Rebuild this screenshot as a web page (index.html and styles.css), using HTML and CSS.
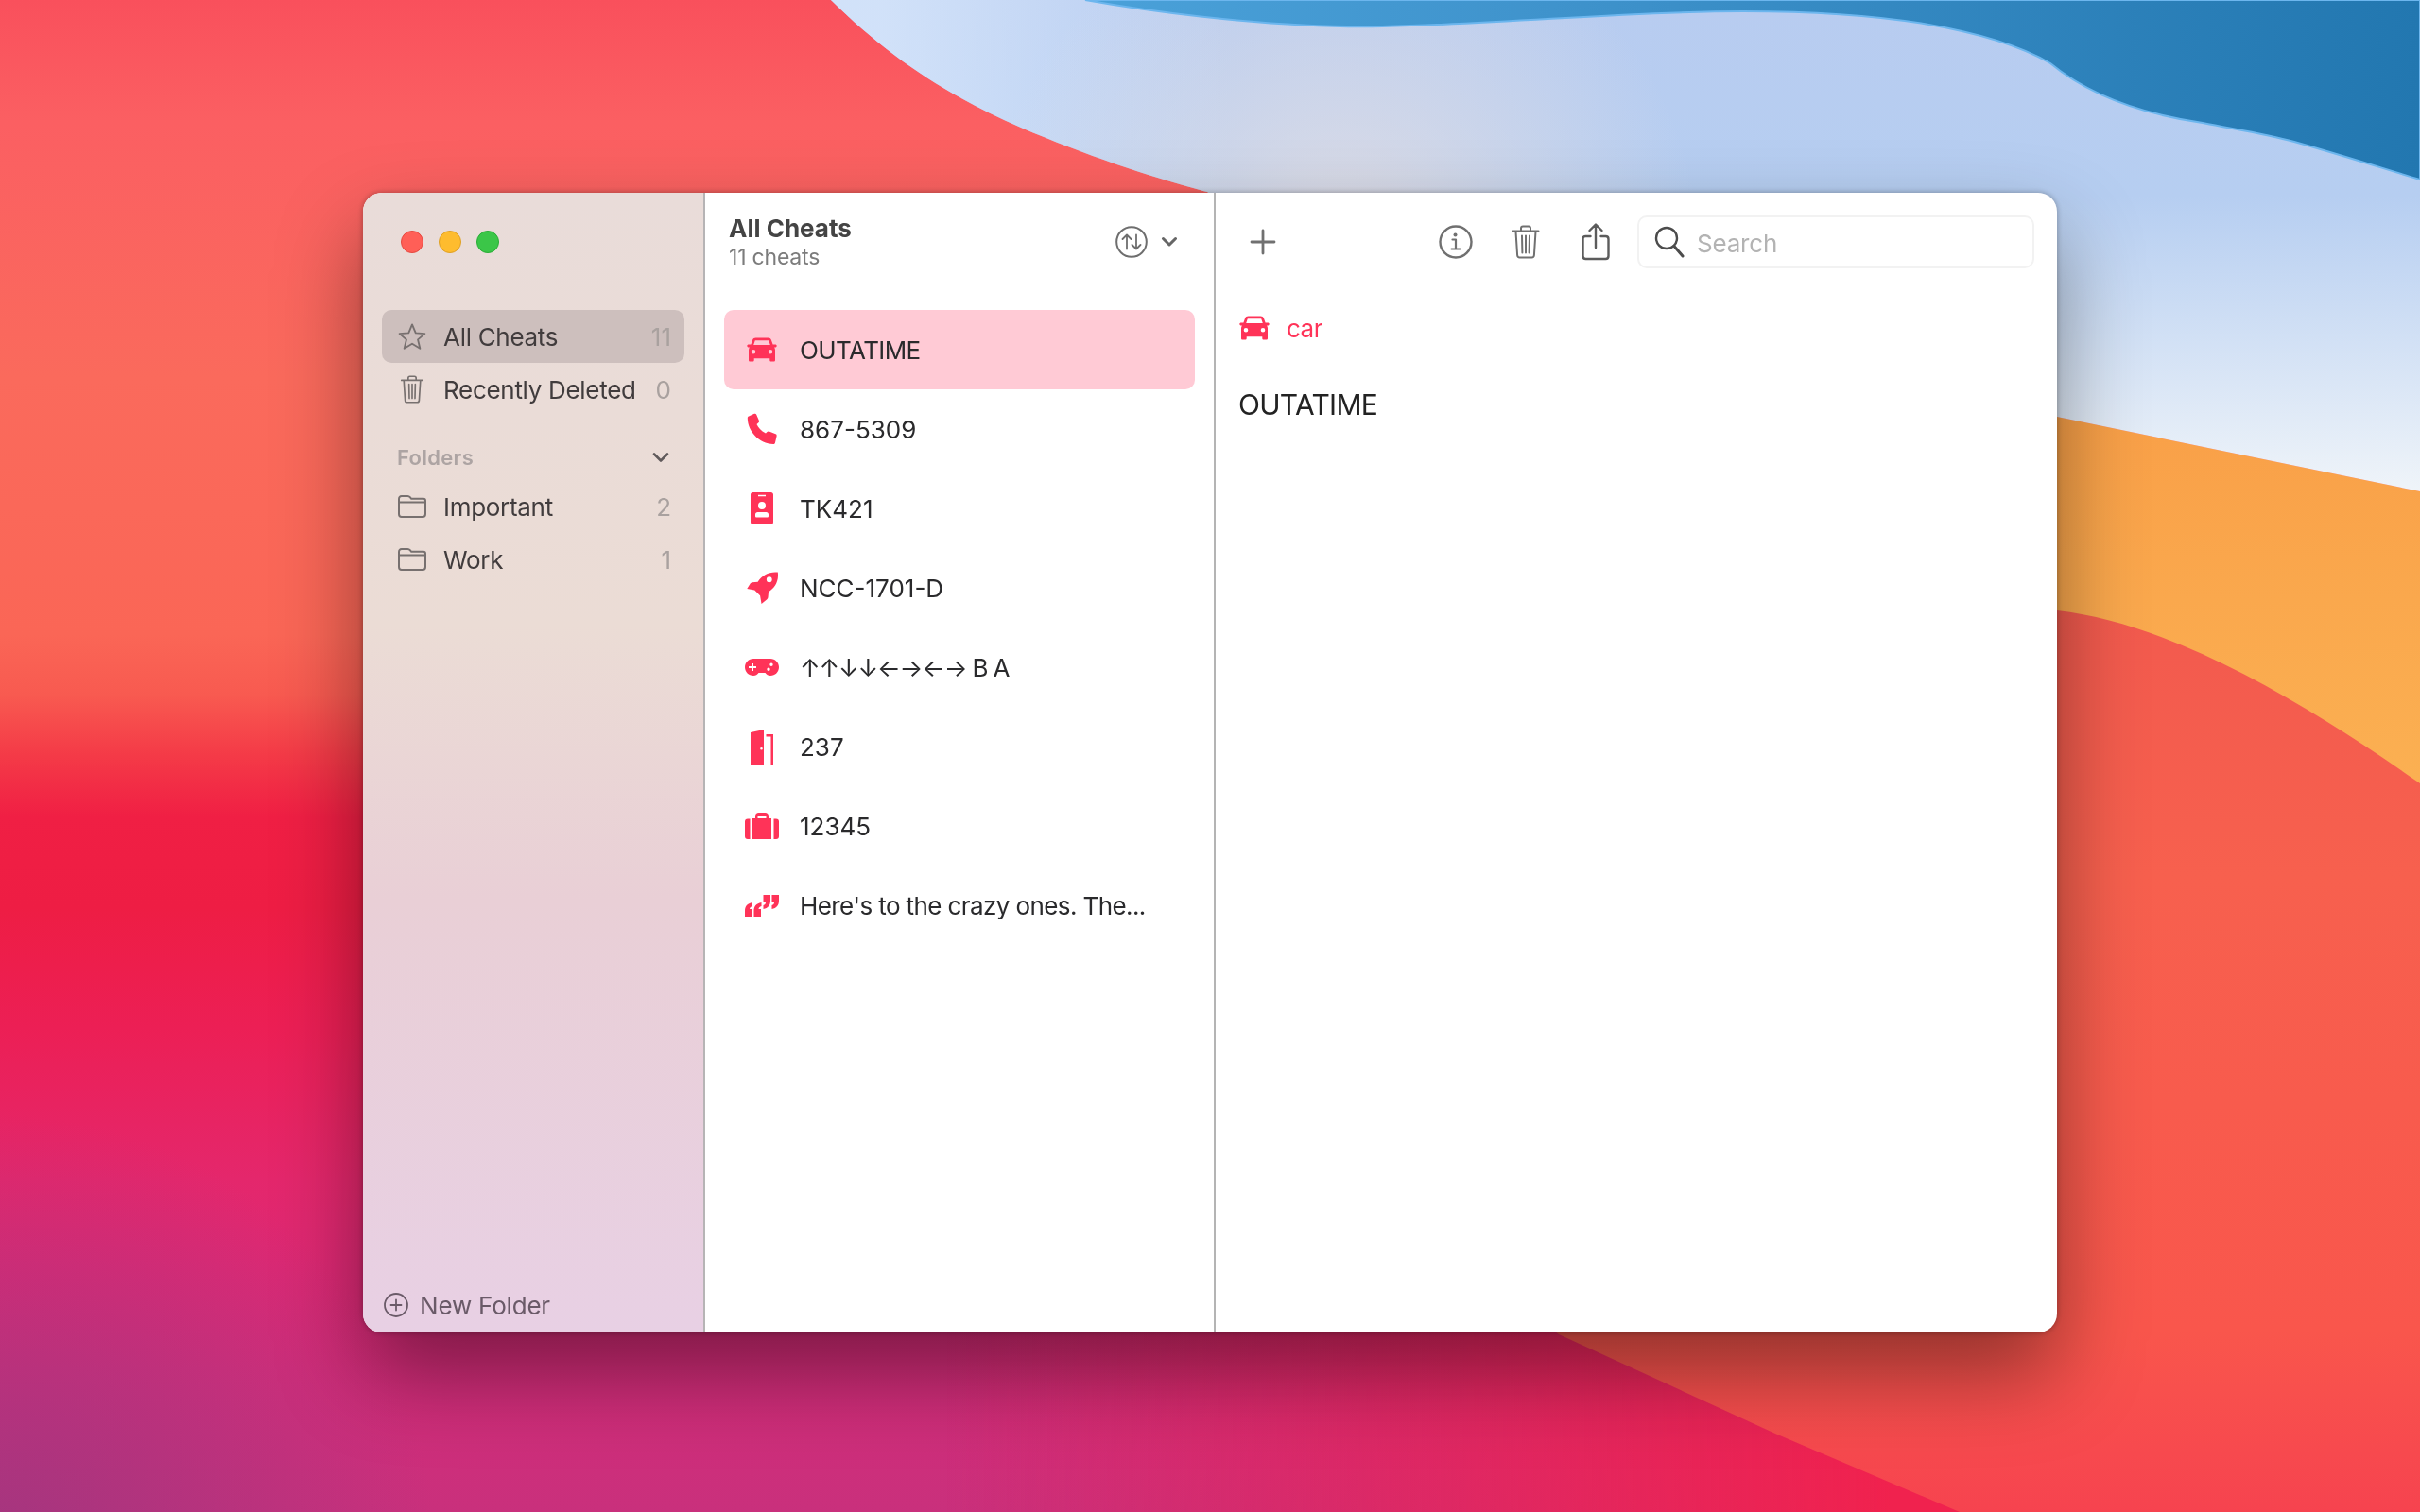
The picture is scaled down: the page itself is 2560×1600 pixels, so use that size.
FILE: index.html
```html
<!DOCTYPE html>
<html lang="en">
<head>
  <meta charset="UTF-8">
  <title>Cheats</title>
  <link rel="stylesheet" href="styles.css">
</head>
<body>
  <svg class="hidden" width="0" height="0">
    <symbol id="car" viewBox="0 0 32 26">
      <path fill-rule="evenodd" d="M9.5 .5h13c1.7 0 2.8.8 3.4 2.3L27.6 7.6H30c1 0 1.7.6 1.7 1.4s-.7 1.5-1.7 1.5h-.9c.6.9.9 1.9.9 3V24c0 1-.6 1.6-1.5 1.6h-2.7c-.9 0-1.5-.6-1.5-1.6v-1.7H7.7V24c0 1-.6 1.6-1.5 1.6H3.5C2.6 25.600 2 25 2 24V13.500c0-1.100.3-2.100.9-3H2C1 10.500.3 9.800.3 9S1 7.600 2 7.600h2.400l1.700-4.800C6.700 1.300 7.800.5 9.500.5zM8.800 3.200 7.200 8h17.600l-1.600-4.800zM7 13a2.300 2.300 0 1 0 0 4.600A2.300 2.300 0 0 0 7 13zm18 0a2.300 2.300 0 1 0 0 4.600 2.300 2.300 0 0 0 0-4.600z"/>
    </symbol>
    <symbol id="trash" viewBox="0 0 30 36">
      <path fill="none" stroke="currentColor" stroke-width="2" stroke-linecap="round" stroke-linejoin="round" d="M1.500 6.500h27M10 6V3.500C10 2.200 10.800 1.500 12 1.500h6c1.200 0 2 .7 2 2V6M4.500 7l1.600 25c.1 1.600 1 2.500 2.500 2.500h12.800c1.500 0 2.400-.9 2.500-2.500L25.500 7M11 11.500l.4 18M15 11.500v18M19 11.500l-.4 18"/>
    </symbol>
    <symbol id="folder" viewBox="0 0 30 24">
      <path fill="none" stroke="currentColor" stroke-width="2" stroke-linejoin="round" d="M1 20V4c0-1.800 1-3 2.800-3h6.400c1.200 0 1.900.4 2.600 1.200l1.400 1.600H27c1.300 0 2 .8 2 2.200V20c0 1.800-1 3-2.800 3H3.800C2 23 1 21.800 1 20zM1 7.500h28"/>
    </symbol>
  </svg>

  <svg class="wallpaper" viewBox="0 0 2560 1600" preserveAspectRatio="none">
    <defs>
      <linearGradient id="wp-base" x1="0" y1="0" x2="0" y2="1">
        <stop offset="0" stop-color="#f9505c"/>
        <stop offset=".08" stop-color="#fb5f62"/>
        <stop offset=".25" stop-color="#fa6a5c"/>
        <stop offset=".42" stop-color="#fa6656"/>
        <stop offset=".46" stop-color="#f85a50"/>
        <stop offset=".5" stop-color="#f43a47"/>
        <stop offset=".54" stop-color="#f01f44"/>
        <stop offset=".6" stop-color="#ee1d44"/>
        <stop offset=".68" stop-color="#ec1f55"/>
        <stop offset=".78" stop-color="#e4276c"/>
        <stop offset=".84" stop-color="#dd2974"/>
        <stop offset=".92" stop-color="#d22d7a"/>
        <stop offset="1" stop-color="#c9307c"/>
      </linearGradient>
      <linearGradient id="wp-low" gradientUnits="userSpaceOnUse" x1="1000" y1="0" x2="2000" y2="0">
        <stop offset="0" stop-color="#f0224e" stop-opacity="0"/>
        <stop offset="1" stop-color="#f0224e"/>
      </linearGradient>
      <linearGradient id="wp-mask-fade" x1="0" y1="0" x2="0" y2="1">
        <stop offset="0" stop-color="#fff" stop-opacity="0"/>
        <stop offset=".5" stop-color="#fff"/>
      </linearGradient>
      <mask id="wp-low-mask"><rect y="1000" width="2560" height="600" fill="url(#wp-mask-fade)"/></mask>
      <radialGradient id="wp-corner" gradientUnits="userSpaceOnUse" cx="0" cy="1640" r="460">
        <stop offset="0" stop-color="#a0367f" stop-opacity=".9"/>
        <stop offset="1" stop-color="#a0367f" stop-opacity="0"/>
      </radialGradient>
      <linearGradient id="wp-red" gradientUnits="userSpaceOnUse" x1="0" y1="640" x2="0" y2="1600">
        <stop offset="0" stop-color="#f25a4e"/>
        <stop offset=".3" stop-color="#f7604e"/>
        <stop offset=".8" stop-color="#f9564c"/>
        <stop offset="1" stop-color="#f6434f"/>
      </linearGradient>
      <linearGradient id="wp-orange" gradientUnits="userSpaceOnUse" x1="0" y1="440" x2="0" y2="830">
        <stop offset="0" stop-color="#f9a048"/>
        <stop offset="1" stop-color="#fbb052"/>
      </linearGradient>
      <linearGradient id="wp-sky" gradientUnits="userSpaceOnUse" x1="0" y1="0" x2="0" y2="520">
        <stop offset="0" stop-color="#b8ccf0"/>
        <stop offset=".4" stop-color="#b6cef1"/>
        <stop offset="1" stop-color="#eff4f9"/>
      </linearGradient>
      <linearGradient id="wp-sky-left" gradientUnits="userSpaceOnUse" x1="930" y1="40" x2="1300" y2="30">
        <stop offset="0" stop-color="#d4e4fa" stop-opacity=".9"/>
        <stop offset="1" stop-color="#d4e4fa" stop-opacity="0"/>
      </linearGradient>
      <radialGradient id="wp-sky-warm" gradientUnits="userSpaceOnUse" cx="1420" cy="270" r="380">
        <stop offset="0" stop-color="#e6dfe2" stop-opacity=".85"/>
        <stop offset="1" stop-color="#e6dfe2" stop-opacity="0"/>
      </radialGradient>
      <linearGradient id="wp-blue" gradientUnits="userSpaceOnUse" x1="1150" y1="0" x2="2560" y2="0">
        <stop offset="0" stop-color="#4aa1d9"/>
        <stop offset=".35" stop-color="#3f93cc"/>
        <stop offset="1" stop-color="#2277b0"/>
      </linearGradient>
    </defs>
    <rect width="2560" height="1600" fill="url(#wp-base)"/>
    <rect y="1000" width="2560" height="600" fill="url(#wp-low)" mask="url(#wp-low-mask)"/>
    <rect y="1100" width="500" height="500" fill="url(#wp-corner)"/>
    <path fill="url(#wp-red)" d="M2560 600L2000 500L1500 1300L1649 1412L1878 1517L2073 1600H2560Z"/>
    <path fill="url(#wp-orange)" d="M2560 520L2176 441L2000 430V640L2176 646C2300 660 2440 745 2560 829Z"/>
    <path fill="url(#wp-sky)" d="M879 0C940 60 1000 100 1080 135C1150 165 1220 188 1277 203L1400 300L2176 441L2560 520V0Z"/>
    <path fill="url(#wp-sky-left)" d="M879 0C940 60 1000 100 1080 135C1150 165 1220 188 1277 203L1400 300H1500V0Z"/>
    <path fill="url(#wp-sky-warm)" d="M879 0C940 60 1000 100 1080 135C1150 165 1220 188 1277 203L1400 300L2176 441L2560 520V0Z"/>
    <path fill="url(#wp-blue)" stroke="#6cb6ee" stroke-width="2" d="M1148 0C1250 18 1370 30 1462 28C1600 25 1720 12 1844 12C1930 12 1985 17 2035 25C2100 36 2140 50 2169 67C2215 105 2275 122 2330 130C2365 137 2395 141 2427 150C2480 165 2520 178 2560 190V0Z"/>
  </svg>

  <div class="desktop">
    <div class="window">
      <aside class="sidebar">
        <div class="traffic">
          <span class="light red"></span>
          <span class="light yellow"></span>
          <span class="light green"></span>
        </div>

        <div class="side-row active">
          <svg class="side-icon" viewBox="0 0 32 30"><path fill="none" stroke="currentColor" stroke-width="2" stroke-linejoin="round" d="M16 1.500l4 9.600 10.300.8-7.800 6.700 2.400 10.100L16 23.300l-8.900 5.400 2.400-10.100-7.800-6.700 10.300-.8z"/></svg>
          <span class="side-label">All Cheats</span>
          <span class="side-count">11</span>
        </div>
        <div class="side-row">
          <svg class="side-icon trash-sm"><use href="#trash"/></svg>
          <span class="side-label">Recently Deleted</span>
          <span class="side-count">0</span>
        </div>

        <div class="side-head">
          <span>Folders</span>
          <svg class="side-chev" viewBox="0 0 18 12"><path fill="none" stroke="currentColor" stroke-width="2.600" stroke-linecap="round" stroke-linejoin="round" d="M2 2.500l7 7 7-7"/></svg>
        </div>
        <div class="side-row">
          <svg class="side-icon folder-sm"><use href="#folder"/></svg>
          <span class="side-label">Important</span>
          <span class="side-count">2</span>
        </div>
        <div class="side-row">
          <svg class="side-icon folder-sm"><use href="#folder"/></svg>
          <span class="side-label">Work</span>
          <span class="side-count">1</span>
        </div>

        <div class="new-folder">
          <svg class="new-icon" viewBox="0 0 26 26"><circle cx="13" cy="13" r="12" fill="none" stroke="currentColor" stroke-width="1.800"/><path stroke="currentColor" stroke-width="1.800" stroke-linecap="round" d="M13 7.500v11M7.500 13h11"/></svg>
          <span>New Folder</span>
        </div>
      </aside>

      <section class="list-pane">
        <header class="list-head">
          <div class="list-titles">
            <div class="list-title">All Cheats</div>
            <div class="list-sub">11 cheats</div>
          </div>
          <svg class="sort-icon" viewBox="0 0 34 34"><circle cx="17" cy="17" r="15.800" fill="none" stroke="currentColor" stroke-width="2"/><path fill="none" stroke="currentColor" stroke-width="1.800" stroke-linecap="round" stroke-linejoin="round" d="M12 24.500V9.500M7.500 14l4.500-4.500 4.500 4.500M22 9.500v15M17.500 20l4.500 4.500 4.500-4.500"/></svg>
          <svg class="sort-chev" viewBox="0 0 18 12"><path fill="none" stroke="currentColor" stroke-width="3" stroke-linecap="round" stroke-linejoin="round" d="M2.500 2.500L9 9l6.500-6.500"/></svg>
        </header>

        <ul class="cheats">
          <li class="cheat selected">
            <span class="cheat-icon"><svg class="ic-car"><use href="#car"/></svg></span>
            <span class="tight">OUTATIME</span>
          </li>
          <li class="cheat">
            <span class="cheat-icon"><svg class="ic-phone" viewBox="0 0 32 34"><path d="M2 3.500L8 .8C9 .4 9.800.8 10.200 1.700L13 8.300C13.300 9.100 13.100 9.800 12.400 10.300L10.500 12C12 15 15 19 20 21.500L21.500 20C22.100 19.400 22.800 19.300 23.500 19.600L30.500 22.300C31.400 22.700 31.800 23.500 31.600 24.400L30 31.500C29.800 32.500 29 33.100 28 33C13 32.500 1 19.500 .8 5.500C.8 4.500 1.200 3.800 2 3.500Z"/></svg></span>
            <span>867-5309</span>
          </li>
          <li class="cheat">
            <span class="cheat-icon"><svg class="ic-badge" viewBox="0 0 24 34"><path fill-rule="evenodd" d="M2.500 0h19C23 0 24 1 24 2.500v29c0 1.500-1 2.500-2.500 2.500h-19C1 34 0 33 0 31.500v-29C0 1 1 0 2.500 0zM8 2.800v1.400h8V2.800zM12 10a4 4 0 1 0 0 8 4 4 0 0 0 0-8zM7.500 21C6 21 5 22 5 23.500V25c0 1 .6 1.500 1.500 1.500h11c.9 0 1.500-.5 1.500-1.500v-1.500C19 22 18 21 16.500 21z"/></svg></span>
            <span>TK421</span>
          </li>
          <li class="cheat">
            <span class="cheat-icon"><svg class="ic-rocket" viewBox="0 0 34 36"><path fill-rule="evenodd" d="M33.800 .6C25 -.5 16.500 3.500 12 11L6 11.500C5 11.600 4.300 12 3.800 12.800L.3 18.500L8.500 20L14.500 26L16 35L22 30C22.800 29.300 23.200 28.600 23.200 27.600L23.700 22C31 17 35 10 33.800 .6ZM24.500 5.500a3 3 0 1 1 0 6 3 3 0 0 1 0-6Z"/></svg></span>
            <span>NCC-1701-D</span>
          </li>
          <li class="cheat">
            <span class="cheat-icon"><svg class="ic-pad" viewBox="0 0 36 18"><path fill-rule="evenodd" d="M9 0h18c5 0 9 4 9 9s-4 9-9 9c-2.500 0-4-1-5.500-3h-7C13 17 11.500 18 9 18c-5 0-9-4-9-9s4-9 9-9zM7 5v3H4v2h3v3h2v-3h3V8H9V5zM28 4.500a1.700 1.700 0 1 0 0 3.400 1.700 1.700 0 0 0 0-3.400zM25 9.500a1.700 1.700 0 1 0 0 3.400 1.700 1.700 0 0 0 0-3.400z"/></svg></span>
            <span class="keys">↑↑↓↓←→←→ B A</span>
          </li>
          <li class="cheat">
            <span class="cheat-icon"><svg class="ic-door" viewBox="0 0 24 37"><path fill-rule="evenodd" d="M0 3L14 0V37H0zM11.500 19a1.300 1.300 0 1 0 0 2.600 1.300 1.300 0 0 0 0-2.600z"/><path d="M16.500 5H24V37H21.500V7.500H16.500z"/></svg></span>
            <span>237</span>
          </li>
          <li class="cheat">
            <span class="cheat-icon"><svg class="ic-case" viewBox="0 0 36 28"><path fill-rule="evenodd" d="M8 6h3V3.500C11 1.500 12.500 0 14.500 0h7C23.500 0 25 1.500 25 3.500V6h3v22H8zM13.500 3v3h9V3z"/><path d="M5.500 6.500V28H3c-2 0-3-1-3-3V9.500c0-2 1-3 3-3zM30.500 6.500H33c2 0 3 1 3 3V25c0 2-1 3-3 3h-2.500z"/></svg></span>
            <span>12345</span>
          </li>
          <li class="cheat">
            <span class="cheat-icon"><svg class="ic-quote" viewBox="0 0 36 23"><path d="M8 8C2.500 9 0 12 0 17V23H7.500V15H5C5 13.500 6 12.500 8 12ZM17.500 8C12 9 9.500 12 9.500 17V23H17V15H14.500C14.500 13.500 15.500 12.500 17.500 12Z"/><path d="M28.500 15C33.500 14 36 11 36 6V0H28.500V8H31C31 9.500 30 10.500 28.500 11ZM19.500 15C24.500 14 27 11 27 6V0H19.500V8H22C22 9.500 21 10.500 19.500 11Z"/></svg></span>
            <span class="tight">Here's to the crazy ones. The...</span>
          </li>
        </ul>
      </section>

      <main class="detail">
        <div class="toolbar">
          <svg class="tool tool-plus" viewBox="0 0 28 28"><path stroke="currentColor" stroke-width="2.800" stroke-linecap="round" d="M14 2v24M2 14h24"/></svg>
          <div class="tool-spacer"></div>
          <svg class="tool tool-info" viewBox="0 0 36 36"><circle cx="18" cy="18" r="16.500" fill="none" stroke="currentColor" stroke-width="2.400"/><circle cx="17.500" cy="10.500" r="2" fill="currentColor"/><path fill="none" stroke="currentColor" stroke-width="2.200" stroke-linecap="round" stroke-linejoin="round" d="M14.500 15.500h3.500v10M13.500 25.500h9"/></svg>
          <svg class="tool tool-trash"><use href="#trash"/></svg>
          <svg class="tool tool-share" viewBox="0 0 30 40"><path fill="none" stroke="currentColor" stroke-width="2.400" stroke-linecap="round" stroke-linejoin="round" d="M15 26V2M8.500 8L15 1.500 21.500 8M9.500 14H4.500C2.500 14 1.500 15 1.500 17V35C1.500 37 2.500 38 4.500 38H25.500C27.500 38 28.500 37 28.500 35V17C28.500 15 27.500 14 25.500 14H20.500"/></svg>
          <div class="search">
            <svg class="search-icon" viewBox="0 0 32 34"><circle cx="13" cy="13" r="11" fill="none" stroke="currentColor" stroke-width="2.400"/><path stroke="currentColor" stroke-width="3" stroke-linecap="round" d="M21 21.500L30 32"/></svg>
            <span class="search-text">Search</span>
          </div>
        </div>

        <div class="detail-tag">
          <svg class="ic-car-tag"><use href="#car"/></svg>
          <span>car</span>
        </div>
        <div class="detail-text">OUTATIME</div>
      </main>
    </div>
  </div>
</body>
</html>
```

FILE: styles.css
```css
html, body {
  margin: 0;
  height: 100%;
}
body {
  font-family: Inter, "Noto Sans", sans-serif;
  overflow: hidden;
  background: #f01f44;
}
.hidden {
  display: block;
  height: 0;
}
.wallpaper {
  position: fixed;
  left: 0;
  top: 0;
  width: 2560px;
  height: 1600px;
}
.desktop {
  position: relative;
  padding: 204px 0 0 384px;
}

.window {
  display: flex;
  width: 1792px;
  height: 1206px;
  background: white;
  border-radius: 20px;
  overflow: hidden;
  box-shadow: 0 44px 90px rgba(0,0,0,0.42), 0 0 6px rgba(0,0,0,0.3);
}

/* sidebar */
.sidebar {
  width: 362px;
  flex: none;
  box-sizing: border-box;
  display: flex;
  flex-direction: column;
  padding: 0 20px;
  border-right: 2px solid #b6b4b5;
  background: linear-gradient(#e9dcd9, #ebdcd5 38%, #e9cfd6 62%, #e8d0e4);
}
.traffic {
  display: flex;
  gap: 16px;
  padding: 40px 0 0 20px;
  height: 84px;
}
.light {
  width: 24px;
  height: 24px;
  border-radius: 50%;
  box-sizing: border-box;
}
.red { background: #ff5f57; border: 1px solid #e5483f; }
.yellow { background: #febc2e; border: 1px solid #dfa023; }
.green { background: #3bc648; border: 1px solid #2aad37; }

.side-row {
  display: flex;
  align-items: center;
  height: 56px;
  padding: 0 14px 0 17px;
  border-radius: 10px;
  font-size: 26px;
  color: #413c3d;
}
.side-row.active {
  background: #cdbfbd;
}
.side-icon {
  width: 30px;
  height: 28px;
  color: #77706f;
  margin-right: 18px;
  flex: none;
}
.trash-sm {
  height: 30px;
}
.folder-sm {
  height: 24px;
}
.side-label {
  flex: 1;
  letter-spacing: -0.3px;
}
.side-count {
  color: #a9a19f;
}
.side-head {
  display: flex;
  align-items: center;
  justify-content: space-between;
  height: 30px;
  margin-top: 29px;
  margin-bottom: 9px;
  padding: 0 16px;
  font-size: 22px;
  font-weight: 600;
  letter-spacing: 0.3px;
  color: #ada4a3;
}
.side-chev {
  width: 18px;
  height: 12px;
  color: #5f595a;
}
.new-folder {
  margin-top: auto;
  display: flex;
  align-items: center;
  gap: 12px;
  height: 30px;
  margin-bottom: 14px;
  padding-left: 2px;
  font-size: 26px;
  letter-spacing: -0.2px;
  color: #6a5a68;
}
.new-icon {
  width: 26px;
  height: 26px;
}

/* middle list */
.list-pane {
  width: 540px;
  flex: none;
  box-sizing: border-box;
  border-right: 2px solid #b4b4b4;
}
.list-head {
  display: flex;
  align-items: center;
  height: 124px;
  box-sizing: border-box;
  padding: 0 38px 20px 25px;
  color: #444;
}
.list-titles {
  flex: 1;
}
.list-title {
  font-size: 26px;
  font-weight: 700;
  line-height: 32px;
  color: #444;
}
.list-sub {
  font-size: 23px;
  line-height: 28px;
  letter-spacing: -0.2px;
  color: #7c7c7c;
}
.sort-icon {
  width: 34px;
  height: 34px;
  color: #6e6e6e;
}
.sort-chev {
  width: 18px;
  height: 12px;
  margin-left: 14px;
  color: #666;
}
.cheats {
  list-style: none;
  margin: 0;
  padding: 0 20px;
}
.cheat {
  display: flex;
  align-items: center;
  height: 84px;
  font-size: 26px;
  color: #2a2a2c;
  border-radius: 10px;
}
.cheat.selected {
  background: #ffcad5;
}
.cheat-icon {
  width: 80px;
  padding: 0 22px;
  box-sizing: border-box;
  display: flex;
  justify-content: center;
  fill: #ff3358;
  flex: none;
}
.cheat-icon svg {
  flex: none;
}
.tight {
  letter-spacing: -0.6px;
}
.keys {
  letter-spacing: -1.2px;
}
.ic-car { width: 32px; height: 26px; }
.ic-phone { width: 32px; height: 34px; }
.ic-badge { width: 24px; height: 34px; }
.ic-rocket { width: 33px; height: 35px; }
.ic-pad { width: 36px; height: 18px; }
.ic-door { width: 24px; height: 37px; }
.ic-case { width: 36px; height: 28px; }
.ic-quote { width: 36px; height: 23px; }

/* detail */
.detail {
  flex: 1;
  padding: 0 24px;
}
.toolbar {
  display: flex;
  align-items: center;
  height: 103px;
  box-sizing: border-box;
  color: #707070;
}
.tool {
  flex: none;
}
.tool-plus {
  width: 28px;
  height: 28px;
  margin-left: 12px;
}
.tool-spacer {
  flex: 1;
}
.tool-info {
  width: 36px;
  height: 36px;
}
.tool-trash {
  width: 30px;
  height: 38px;
  margin-left: 41px;
}
.tool-share {
  width: 30px;
  height: 40px;
  margin-left: 44px;
  color: #5c5c5c;
}
.search {
  width: 420px;
  height: 56px;
  box-sizing: border-box;
  margin-left: 29px;
  display: flex;
  align-items: center;
  border: 2px solid #f2f2f2;
  border-radius: 10px;
  padding: 0 16px;
}
.search-icon {
  width: 32px;
  height: 34px;
  color: #4c4c4c;
  flex: none;
}
.search-text {
  margin-left: 13px;
  padding-top: 4px;
  font-size: 26px;
  letter-spacing: -0.2px;
  color: #b3b3b3;
}
.detail-tag {
  display: flex;
  align-items: center;
  gap: 18px;
  margin-top: 16px;
  margin-left: 1px;
  height: 48px;
  font-size: 26px;
  letter-spacing: -0.5px;
  color: #ff3358;
}
.ic-car-tag {
  width: 32px;
  height: 26px;
  fill: #ff3358;
}
.detail-text {
  margin-top: 35px;
  font-size: 30px;
  line-height: 44px;
  letter-spacing: -0.7px;
  color: #222;
}
```
